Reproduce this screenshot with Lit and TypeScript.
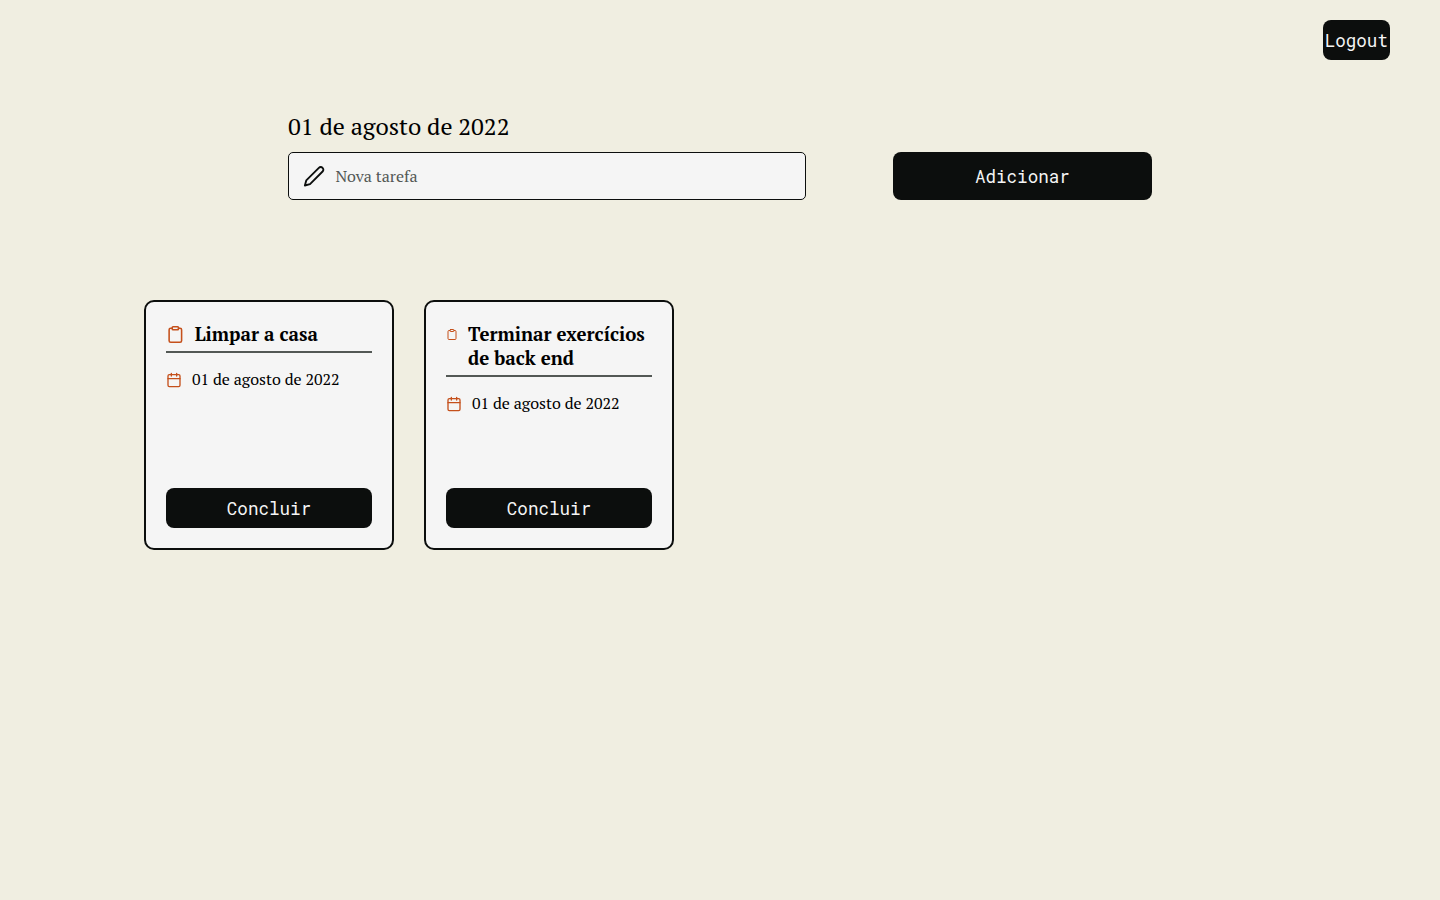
import { LitElement, html, css, svg } from "lit";
import { customElement, state } from "lit/decorators.js";

interface Task {
  title: string;
  date: string;
  iconWidth: number;
}

const clipboard = svg`<path d="M16 4h2a2 2 0 0 1 2 2v14a2 2 0 0 1-2 2H6a2 2 0 0 1-2-2V6a2 2 0 0 1 2-2h2"/><rect x="8" y="2" width="8" height="4" rx="1" ry="1"/>`;
const calendar = svg`<rect x="3" y="4" width="18" height="18" rx="2" ry="2"/><path d="M16 2v4M8 2v4M3 10h18"/>`;
const pencil = svg`<path d="M17 3a2.828 2.828 0 1 1 4 4L7.5 20.5 2 22l1.5-5.5L17 3z"/>`;

@customElement("app-root")
export class AppRoot extends LitElement {
  static styles = css`
    :host {
      display: block;
      min-height: 100vh;
      background: #f0eee1;
      color: #0c0e0d;
      font-family: "PT Serif", "Liberation Serif", serif;
    }
    * {
      box-sizing: border-box;
      margin: 0;
      padding: 0;
    }
    svg {
      fill: none;
      stroke: currentColor;
      stroke-width: 2;
      stroke-linecap: round;
      stroke-linejoin: round;
    }
    button {
      height: 40px;
      border: none;
      border-radius: 8px;
      background: #0c0e0d;
      color: #f5f5f5;
      font: 17.6px "Roboto Mono", "DejaVu Sans Mono", monospace;
      white-space: nowrap;
    }
    header {
      display: flex;
      justify-content: flex-end;
      padding: 20px 50px 0;
    }
    .logout {
      width: 67.36px;
    }
    .new-task {
      width: 60%;
      margin: 50px auto 0;
    }
    .today {
      height: 32px;
      margin-bottom: 10px;
      font-size: 24px;
      font-weight: 400;
      line-height: 32px;
      white-space: nowrap;
      color: #000;
    }
    form {
      display: flex;
      justify-content: space-between;
    }
    .field {
      display: flex;
      align-items: center;
      gap: 10px;
      width: 60%;
      height: 48px;
      padding: 0 14px;
      border: 1px solid #0c0e0d;
      border-radius: 5px;
      background: #f5f5f5;
    }
    .field svg {
      width: 22.4px;
      height: 22.4px;
      flex: none;
    }
    input {
      flex: 1;
      min-width: 0;
      border: none;
      outline: none;
      background: transparent;
      font: 16px "PT Serif", "Liberation Serif", serif;
      color: inherit;
    }
    input::placeholder {
      color: #535855;
      opacity: 1;
    }
    .add {
      width: 30%;
      height: 48px;
    }
    .tasks {
      display: flex;
      flex-wrap: wrap;
      gap: 30px;
      width: 80%;
      margin: 100px auto 0;
    }
    .card {
      display: flex;
      flex-direction: column;
      width: 250px;
      height: 250px;
      padding: 20px;
      border: 2px solid #0c0e0d;
      border-radius: 10px;
      background: #f5f5f5;
      color: #000;
    }
    .title {
      display: flex;
      gap: 10px;
      padding-bottom: 5px;
      border-bottom: 2px solid #535855;
      margin-bottom: 16px;
    }
    .title svg {
      flex: none;
      height: 25px;
      margin-bottom: -1px;
      color: #c5501b;
    }
    h2 {
      font-size: 18.72px;
      line-height: 24px;
    }
    .date {
      display: flex;
      gap: 10px;
      height: 22px;
      font-size: 16px;
      line-height: 20px;
      white-space: nowrap;
    }
    .date svg {
      width: 16px;
      height: 22px;
      color: #c5501b;
    }
    .done {
      margin-top: auto;
    }
  `;

  @state() private tasks: Task[] = [
    { title: "Limpar a casa", date: "01 de agosto de 2022", iconWidth: 18.72 },
    { title: "Terminar exercícios de back end", date: "01 de agosto de 2022", iconWidth: 12 },
  ];

  render() {
    return html`
      <header><button class="logout">Logout</button></header>
      <section class="new-task">
        <h1 class="today">01 de agosto de 2022</h1>
        <form @submit=${(e: Event) => e.preventDefault()}>
          <label class="field">
            <svg viewBox="0 0 24 24">${pencil}</svg>
            <input placeholder="Nova tarefa" />
          </label>
          <button class="add">Adicionar</button>
        </form>
      </section>
      <main class="tasks">
        ${this.tasks.map(
          (t) => html`<article class="card">
            <div class="title">
              <svg viewBox="0 0 24 24" width=${t.iconWidth}>${clipboard}</svg>
              <h2>${t.title}</h2>
            </div>
            <div class="date"><svg viewBox="0 0 24 24">${calendar}</svg><span>${t.date}</span></div>
            <button class="done">Concluir</button>
          </article>`
        )}
      </main>
    `;
  }
}
